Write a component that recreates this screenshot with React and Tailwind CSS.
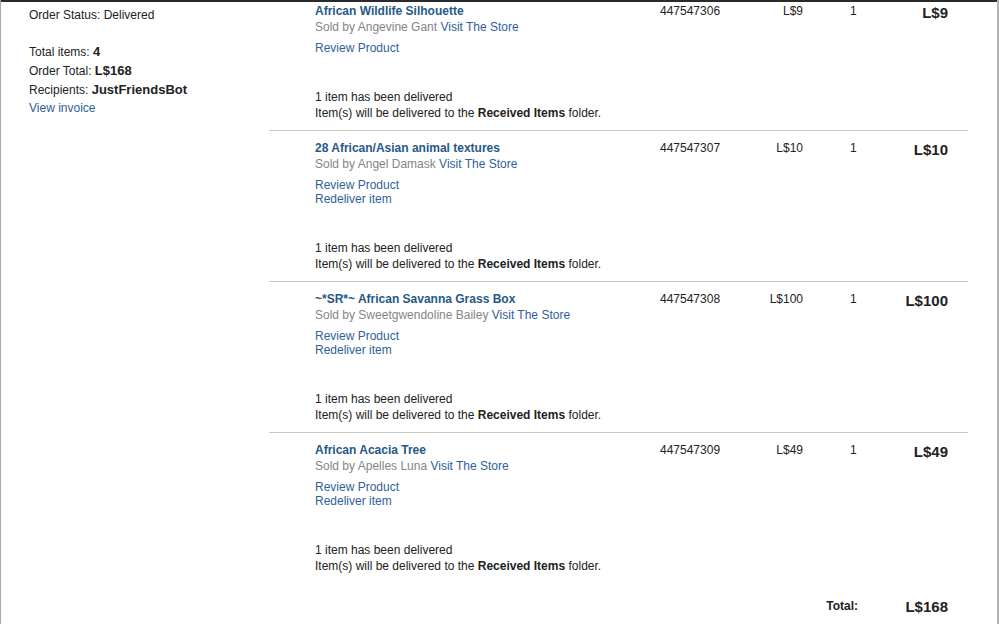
import React from "react";

const items = [
  { title: "African Wildlife Silhouette", seller: "Angevine Gant", no: "447547306", price: "L$9", total: "L$9", redeliver: false },
  { title: "28 African/Asian animal textures", seller: "Angel Damask", no: "447547307", price: "L$10", total: "L$10", redeliver: true },
  { title: "~*SR*~ African Savanna Grass Box", seller: "Sweetgwendoline Bailey", no: "447547308", price: "L$100", total: "L$100", redeliver: true },
  { title: "African Acacia Tree", seller: "Apelles Luna", no: "447547309", price: "L$49", total: "L$49", redeliver: true },
];

function Row({ it, first, last }) {
  return (
    <div className={`flex pt-[9px] pb-[9px] ${first ? "-mt-[8px]" : ""} ${last ? "" : "border-b border-b-[#c8c8c8]"}`}>
      <div className="w-[46px] shrink-0" />
      <div className="w-[345px] shrink-0">
        <div className="leading-[16px] font-bold text-[#285887]">{it.title}</div>
        <div className="leading-[16px] text-[#858585]">
          Sold by {it.seller} <span className="text-[#2f619a]">Visit The Store</span>
        </div>
        <div className="mt-[6px] leading-[14px] text-[#2f619a]">Review Product</div>
        {it.redeliver && <div className="leading-[14px] text-[#2f619a]">Redeliver item</div>}
        <div className="mt-[34px] leading-[16px] text-[#222]">
          <div>1 item has been delivered</div>
          <div>
            Item(s) will be delivered to the <span className="font-bold">Received Items</span> folder.
          </div>
        </div>
      </div>
      <div className="w-[100px] shrink-0 leading-[16px] text-[#222]">{it.no}</div>
      <div className="w-[43px] shrink-0 leading-[16px] text-right text-[#222]">{it.price}</div>
      <div className="w-[60px] shrink-0 pl-[47px] leading-[16px] text-[#222]">1</div>
      <div className="w-[85px] shrink-0 mt-[1px] leading-[18px] text-right text-[15px] font-bold text-[#222]">{it.total}</div>
    </div>
  );
}

export default function App() {
  return (
    <div
      className="w-[999px] h-[624px] overflow-hidden bg-white flex flex-col border-l border-l-[#a8a8a8] border-r-2 border-r-[#b4b4b4] text-[12px] text-[#222]"
      style={{ fontFamily: '"Liberation Sans", Arial, sans-serif' }}
    >
      <div className="h-[2px] bg-[#2a2a2a] shrink-0" />
      <div className="flex">
        <div className="w-[268px] shrink-0 pl-[28px] pt-[4px]">
          <div className="h-[19px] leading-[19px]">Order Status: Delivered</div>
          <div className="mt-[18px]">
            <div className="h-[19px] leading-[19px]">
              Total items: <span className="font-bold text-[13px] leading-none">4</span>
            </div>
            <div className="h-[19px] leading-[19px]">
              Order Total: <span className="font-bold text-[13px] leading-none">L$168</span>
            </div>
            <div className="h-[19px] leading-[19px]">
              Recipients: <span className="font-bold text-[13px] leading-none">JustFriendsBot</span>
            </div>
            <div className="h-[17px] leading-[17px] text-[#2f619a]">View invoice</div>
          </div>
        </div>
        <div className="w-[699px] shrink-0">
          {items.map((it, i) => (
            <Row key={it.no} it={it} first={i === 0} last={i === items.length - 1} />
          ))}
          <div className="flex w-[679px] justify-end items-center mt-[13px]">
            <div className="font-bold leading-[16px] mr-[5px]">Total:</div>
            <div className="w-[85px] text-right text-[15px] font-bold leading-[18px] mt-[2px]">L$168</div>
          </div>
        </div>
      </div>
    </div>
  );
}
